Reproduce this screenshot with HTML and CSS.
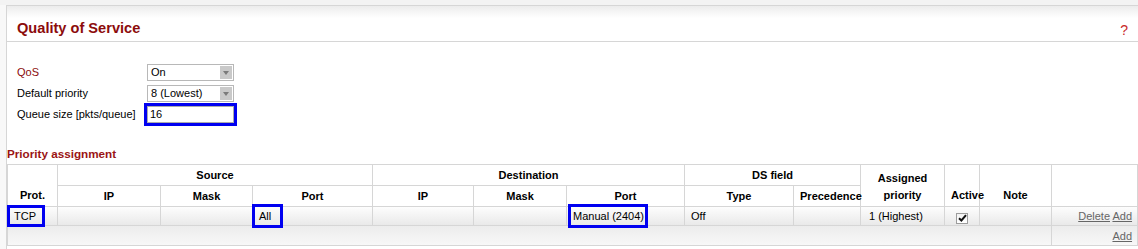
FILE: index.html
```html
<!DOCTYPE html>
<html>
<head>
<meta charset="utf-8">
<title>Quality of Service</title>
<link rel="stylesheet" href="styles.css">
</head>
<body>
<div class="topstrip"></div>
<div class="panel">
  <div class="panel-head">
    <h1 class="title">Quality of Service</h1>
    <span class="help">?</span>
  </div>
  <div class="form">
    <span class="lbl lbl-red">QoS</span>
    <div class="select"><span class="val">On</span><span class="arrow"></span></div>
    <span class="lbl">Default priority</span>
    <div class="select"><span class="val">8 (Lowest)</span><span class="arrow"></span></div>
    <span class="lbl">Queue size [pkts/queue]</span>
    <div class="input">16</div>
  </div>
  <h2 class="section">Priority assignment</h2>
  <table class="grid">
    <colgroup>
      <col class="c-prot"><col class="c-ip"><col class="c-mask"><col class="c-port">
      <col class="c-ip2"><col class="c-mask2"><col class="c-port2">
      <col class="c-type"><col class="c-prec"><col class="c-prio">
      <col class="c-act"><col class="c-note"><col class="c-ops">
    </colgroup>
    <thead>
      <tr class="hr1">
        <th rowspan="2" class="bottom">Prot.</th>
        <th colspan="3">Source</th>
        <th colspan="3">Destination</th>
        <th colspan="2">DS field</th>
        <th rowspan="2" class="bottom">Assigned<br>priority</th>
        <th rowspan="2" class="bottom">Active</th>
        <th rowspan="2" class="bottom">Note</th>
        <th rowspan="2"></th>
      </tr>
      <tr class="hr2">
        <th>IP</th><th>Mask</th><th>Port</th>
        <th>IP</th><th>Mask</th><th>Port</th>
        <th>Type</th><th>Precedence</th>
      </tr>
    </thead>
    <tbody>
      <tr class="data">
        <td class="mark">TCP<span class="hl hl-tcp"></span></td>
        <td></td>
        <td></td>
        <td class="mark">All<span class="hl hl-all"></span></td>
        <td></td>
        <td></td>
        <td class="mark">Manual (2404)<span class="hl hl-manual"></span></td>
        <td>Off</td>
        <td></td>
        <td class="prio">1 (Highest)</td>
        <td class="center"><span class="chk"><svg width="9" height="8" viewBox="0 0 9 8"><path d="M1 4.2 L3.4 6.5 L8 1.2" fill="none" stroke="#111" stroke-width="2"/></svg></span></td>
        <td></td>
        <td class="ops"><a href="#">Delete</a> <a href="#">Add</a></td>
      </tr>
      <tr class="addrow">
        <td colspan="12"></td>
        <td class="ops"><a href="#">Add</a></td>
      </tr>
    </tbody>
  </table>
</div>
</body>
</html>
```
FILE: styles.css
```css
html, body {
  margin: 0;
  padding: 0;
}
body {
  background: #f8f8f8;
  font-family: "Liberation Sans", Arial, sans-serif;
  font-size: 11px;
  color: #000;
  overflow: hidden;
  width: 1138px;
}
.topstrip {
  height: 5px;
  background: #f3f3f3;
}
.panel {
  margin-left: 6px;
  border-top: 1px solid #d6d6d6;
  border-left: 1px solid #d6d6d6;
  background: #fff;
  padding-bottom: 10px;
}
.panel-head {
  height: 36px;
  box-sizing: border-box;
  border-bottom: 1px solid #d6d6d6;
  background: linear-gradient(#ececec, #ffffff 12px);
  display: flex;
  justify-content: space-between;
  align-items: baseline;
  padding: 14px 10px 0 10px;
}
.title {
  margin: 0;
  font-size: 14.6px;
  line-height: 17px;
  font-weight: bold;
  color: #8c0c0c;
}
.help {
  font-size: 14px;
  line-height: 17px;
  color: #c92a2a;
  position: relative;
  top: 2px;
}
.form {
  display: grid;
  grid-template-columns: 130px 87px;
  grid-auto-rows: 17px;
  row-gap: 4px;
  padding-left: 10px;
  margin-top: 22px;
  align-items: center;
}
.lbl {
  line-height: 17px;
  white-space: nowrap;
}
.lbl-red {
  color: #8c0c0c;
}
.select {
  height: 17px;
  box-sizing: border-box;
  border: 1px solid #b8b8b8;
  background: #fff;
  display: flex;
  justify-content: space-between;
  align-items: center;
  padding-left: 3px;
}
.select .val {
  line-height: 15px;
}
.arrow {
  width: 12px;
  height: 13px;
  margin-right: 1px;
  background: #c9c9c9;
  display: flex;
  align-items: center;
  justify-content: center;
}
.arrow::after {
  content: "";
  border-left: 3px solid transparent;
  border-right: 3px solid transparent;
  border-top: 4px solid #7b7b7b;
}
.input {
  height: 17px;
  box-sizing: border-box;
  border: 1px solid #ababab;
  padding-left: 2px;
  line-height: 15px;
  outline: 3px solid #0000f0;
}
.section {
  margin: 24px 0 3px 0;
  font-size: 11.7px;
  line-height: 14px;
  font-weight: bold;
  color: #9a1414;
}
.grid {
  border-collapse: collapse;
  table-layout: fixed;
  width: 1131px;
}
.grid th, .grid td {
  border: 1px solid #d6d6d6;
  padding: 0 6px;
  font-size: 11px;
  white-space: nowrap;
  overflow: visible;
}
.grid th {
  font-weight: bold;
  text-align: center;
  line-height: 17px;
  vertical-align: middle;
}
.grid th.bottom {
  vertical-align: bottom;
  padding-bottom: 2px;
}
.c-prot { width: 50px; }
.c-ip { width: 103px; }
.c-mask { width: 92px; }
.c-port { width: 120px; }
.c-ip2 { width: 101px; }
.c-mask2 { width: 93px; }
.c-port2 { width: 118px; }
.c-type { width: 109px; }
.c-prec { width: 67px; }
.c-prio { width: 84px; }
.c-act { width: 35px; }
.c-note { width: 72px; }
.c-ops { width: 86px; }
.hr1 { height: 21px; }
.hr2 { height: 21px; }
.grid tr.data {
  height: 19px;
  background: linear-gradient(#fdfdfd, #e8e8e8);
}
.grid tr.addrow {
  height: 20px;
  background: linear-gradient(#ececec, #f8f8f8);
}
.grid td {
  vertical-align: middle;
  line-height: 14px;
}
.grid td.prio {
  padding-left: 8px;
}
.grid td.center {
  text-align: center;
  padding: 0;
}
.grid td.ops {
  text-align: right;
  padding-right: 5px;
}
.ops a {
  color: #666;
  text-decoration: underline;
}
.mark {
  position: relative;
}
.hl {
  position: absolute;
  box-sizing: border-box;
  border: 3px solid #0000f0;
}
.hl-tcp { left: -1px; top: -2px; width: 38px; height: 22px; }
.hl-all { left: -1px; top: -3px; width: 31px; height: 24px; }
.hl-manual { left: 1px; top: -3px; width: 80px; height: 24px; }
.chk {
  display: inline-block;
  width: 12px;
  height: 11px;
  box-sizing: border-box;
  border: 1px solid #9c9c9c;
  background: linear-gradient(#f2f2f2, #ffffff);
  vertical-align: middle;
  position: relative;
  top: 1px;
  line-height: 0;
}
.chk svg {
  display: block;
  margin: 0.5px 0 0 0.5px;
}
```
